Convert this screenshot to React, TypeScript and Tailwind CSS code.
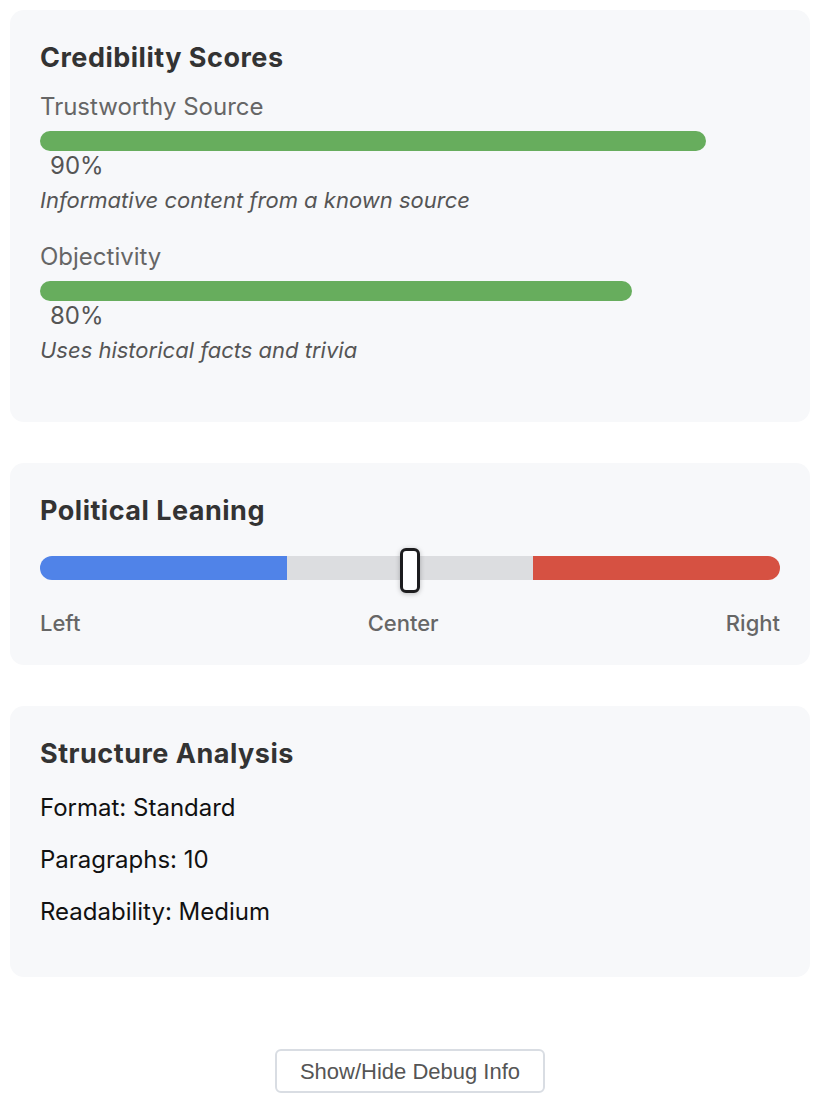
import React from "react";

const font = { fontFamily: "Inter, 'Noto Sans', sans-serif" };

function Score({ label, pct, desc, gapTop }: { label: string; pct: number; desc: string; gapTop: string }) {
  return (
    <div className={`flex flex-col ${gapTop}`}>
      <div className="text-[24px] leading-[30px] text-[#666666]">{label}</div>
      <div className="mt-[9px] h-[20px] w-full">
        <div className="h-[20px] rounded-full bg-[#67ad5d]" style={{ width: `${pct}%` }} />
      </div>
      <div className="ml-[10px] text-[24px] leading-[30px] text-[#555555]">{pct}%</div>
      <div className="mt-[4px] text-[22px] italic leading-[30px] text-[#555555]">{desc}</div>
    </div>
  );
}

export default function App() {
  return (
    <div className="flex min-h-[1108px] flex-col bg-white pl-[10px] pr-[8px] pt-[10px]" style={font}>
      <div className="flex flex-col gap-[41px]">
        <div className="h-[412px] rounded-[14px] bg-[#f7f8fa] px-[30px] pt-[32px]">
          <h2 className="text-[27px] font-bold leading-[32px] tracking-[0.5px] text-[#333333]">Credibility Scores</h2>
          <Score gapTop="mt-[18px]" label="Trustworthy Source" pct={90} desc="Informative content from a known source" />
          <Score gapTop="mt-[27px]" label="Objectivity" pct={80} desc="Uses historical facts and trivia" />
        </div>

        <div className="h-[202px] rounded-[14px] bg-[#f7f8fa] px-[30px] pt-[32px]">
          <h2 className="text-[27px] font-bold leading-[32px] tracking-[0.5px] text-[#333333]">Political Leaning</h2>
          <div className="relative mt-[29px] flex h-[24px] w-full">
            <div className="flex h-[24px] w-full overflow-hidden rounded-full">
              <div className="h-full flex-1 bg-[#5083e8]" />
              <div className="h-full flex-1 bg-[#dcdde0]" />
              <div className="h-full flex-1 bg-[#d65142]" />
            </div>
            <div className="absolute left-[360px] top-[-8px] h-[45px] w-[20px] rounded-[6px] border-[3px] border-[#1d1d1f] bg-white shadow-[0_1px_5px_rgba(0,0,0,0.25)]" />
          </div>
          <div className="mt-[28px] flex justify-between text-[22px] font-medium leading-[30px] text-[#666666]">
            <span>Left</span>
            <span>Center</span>
            <span>Right</span>
          </div>
        </div>

        <div className="h-[271px] rounded-[14px] bg-[#f7f8fa] px-[30px] pt-[32px]">
          <h2 className="text-[27px] font-bold leading-[32px] tracking-[0.5px] text-[#333333]">Structure Analysis</h2>
          <div className="mt-[23px] flex flex-col gap-[22px] text-[24px] leading-[30px] text-[#111111]">
            <div>Format: Standard</div>
            <div>Paragraphs: 10</div>
            <div>Readability: Medium</div>
          </div>
        </div>
      </div>

      <div className="mt-[72px] flex justify-center">
        <button
          className="h-[44px] w-[270px] rounded-[6px] border-[2px] border-[#d9dde3] bg-white text-[22px] text-[#555555]"
          style={{ fontFamily: "'Liberation Sans', Arial, sans-serif" }}
        >
          Show/Hide Debug Info
        </button>
      </div>
    </div>
  );
}
